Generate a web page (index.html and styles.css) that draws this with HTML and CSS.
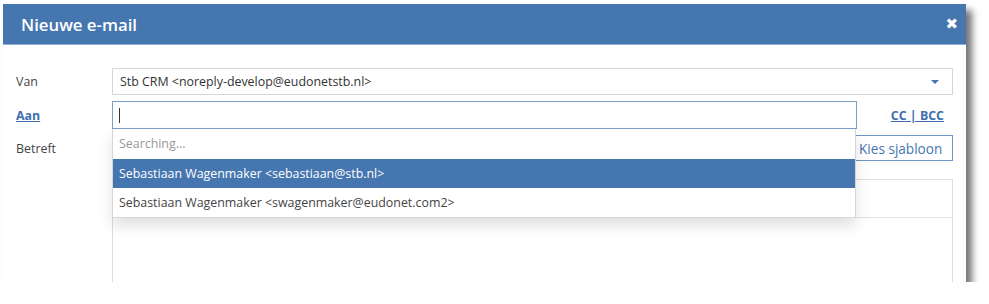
FILE: index.html
```html
<!DOCTYPE html>
<html>
<head>
  <title>Nieuwe e-mail</title>
  <link rel="stylesheet" href="styles.css">
</head>
<body>
  <div class="dialog">
    <div class="dialog-header">
      <h1 class="dialog-title">Nieuwe e-mail</h1>
      <span class="close-btn">&#10006;</span>
    </div>

    <div class="dialog-body">
      <div class="form-row row-van">
        <label class="field-label">Van</label>
        <div class="select-box">
          <span>Stb CRM &lt;noreply-develop@eudonetstb.nl&gt;</span>
          <span class="caret"></span>
        </div>
      </div>

      <div class="form-row row-aan">
        <a class="field-label link" href="#">Aan</a>
        <div class="to-wrap">
          <div class="text-input focus"><span class="cursor"></span></div>
          <div class="suggest">
            <div class="suggest-item muted">Searching...</div>
            <div class="suggest-item active">Sebastiaan Wagenmaker &lt;sebastiaan@stb.nl&gt;</div>
            <div class="suggest-item">Sebastiaan Wagenmaker &lt;swagenmaker@eudonet.com2&gt;</div>
          </div>
        </div>
        <a class="cc-link" href="#">CC | BCC</a>
      </div>

      <div class="form-row row-subject">
        <label class="field-label">Betreft</label>
        <div class="text-input subject"></div>
        <button class="template-btn">Kies sjabloon</button>
      </div>

      <div class="form-row row-editor">
        <span class="field-label"></span>
        <div class="editor">
          <div class="editor-toolbar"></div>
          <div class="editor-content"></div>
        </div>
      </div>
    </div>
  </div>
</body>
</html>
```

FILE: styles.css
```css
* {
  margin: 0;
  padding: 0;
  box-sizing: border-box;
  font-family: 'Open Sans', 'Liberation Sans', sans-serif;
}

body {
  background: #fff;
  color: #444;
  font-size: 12.4px;
}

.dialog {
  width: 963px;
  height: 278px;
  margin: 4px 0 0 3px;
  background: #fff;
  overflow: hidden;
  box-shadow: 6px 6px 7px rgba(0, 0, 0, 0.55);
}

.dialog-header {
  height: 41px;
  background: #4676b0;
  border-bottom: 1px solid #8fb0d6;
  display: flex;
  align-items: center;
  justify-content: space-between;
  padding: 0 8px 0 18px;
}

.dialog-title {
  color: #fff;
  font-size: 16.8px;
  font-weight: 600;
}

.close-btn {
  color: #fff;
  font-size: 15px;
  font-weight: bold;
  font-family: 'DejaVu Sans', sans-serif;
}

.dialog-body {
  padding: 23px 13px 0 13px;
}

.form-row {
  display: flex;
  align-items: center;
}

.field-label {
  flex: 0 0 96px;
  color: #444;
  font-size: 12.4px;
}

.link {
  color: #3d6fb0;
  font-weight: bold;
  text-decoration: underline;
}

.select-box {
  flex: 1;
  height: 27px;
  border: 1px solid #d6d6d6;
  display: flex;
  align-items: center;
  justify-content: space-between;
  padding: 0 13px 0 7px;
  color: #333;
}

.caret {
  width: 0;
  height: 0;
  border-left: 4px solid transparent;
  border-right: 4px solid transparent;
  border-top: 4px solid #4676b0;
}

.row-aan {
  margin-top: 6px;
}

.to-wrap {
  position: relative;
  flex: 0 0 745px;
}

.text-input {
  height: 28px;
  border: 1px solid #d6d6d6;
  background: #fff;
  display: flex;
  align-items: center;
  padding-left: 6px;
}

.text-input.focus {
  border-color: #7f9fc8;
}

.cursor {
  width: 1px;
  height: 15px;
  background: #333;
}

.suggest {
  position: absolute;
  top: 28px;
  left: 0;
  width: 744px;
  background: #fff;
  border: 1px solid #d6d6d6;
  border-top: none;
  box-shadow: 0 8px 14px rgba(0, 0, 0, 0.12);
  z-index: 5;
}

.suggest-item {
  height: 29px;
  line-height: 29px;
  padding-left: 6px;
  color: #444;
}

.suggest-item.muted {
  color: #999;
  height: 30px;
  line-height: 30px;
}

.suggest-item.active {
  background: #4676b0;
  color: #fff;
}

.cc-link {
  flex: 1;
  text-align: right;
  padding-right: 9px;
  color: #3d6fb0;
  font-weight: bold;
  font-size: 12.4px;
  text-decoration: underline;
}

.row-subject {
  margin-top: 6px;
}

.subject {
  flex: 1;
  height: 26px;
  margin-right: 4px;
}

.template-btn {
  flex: 0 0 102px;
  height: 26px;
  background: #fff;
  border: 1px solid #6f95c4;
  color: #4676b0;
  font-size: 13.6px;
  text-align: left;
  padding-left: 7px;
}

.row-editor {
  margin-top: 18px;
  align-items: stretch;
}

.editor {
  flex: 1;
  height: 120px;
  border: 1px solid #ddd;
}

.editor-toolbar {
  height: 38px;
  border-bottom: 1px solid #e2e2e2;
}
```
